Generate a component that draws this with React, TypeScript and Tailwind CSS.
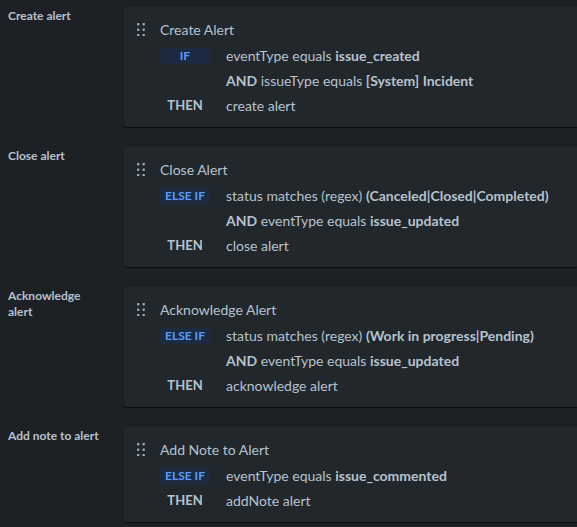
const rules = [
  {
    label: "Create alert",
    title: "Create Alert",
    badge: "IF",
    lines: [
      [{ t: "eventType equals " }, { t: "issue_created", b: true }],
      [{ t: "AND", b: true }, { t: " issueType equals " }, { t: "[System] Incident", b: true }],
    ],
    then: "create alert",
  },
  {
    label: "Close alert",
    title: "Close Alert",
    badge: "ELSE IF",
    lines: [
      [{ t: "status matches (regex) " }, { t: "(Canceled|Closed|Completed)", b: true }],
      [{ t: "AND", b: true }, { t: " eventType equals " }, { t: "issue_updated", b: true }],
    ],
    then: "close alert",
  },
  {
    label: "Acknowledge alert",
    title: "Acknowledge Alert",
    badge: "ELSE IF",
    lines: [
      [{ t: "status matches (regex) " }, { t: "(Work in progress|Pending)", b: true }],
      [{ t: "AND", b: true }, { t: " eventType equals " }, { t: "issue_updated", b: true }],
    ],
    then: "acknowledge alert",
  },
  {
    label: "Add note to alert",
    title: "Add Note to Alert",
    badge: "ELSE IF",
    lines: [[{ t: "eventType equals " }, { t: "issue_commented", b: true }]],
    then: "addNote alert",
  },
];

function Handle() {
  return (
    <svg width="10" height="14" viewBox="0 0 10 14" className="shrink-0">
      {[1, 6.5, 12].map((y) =>
        [1, 6.5].map((x) => <rect key={`${x}-${y}`} x={x} y={y} width="2.4" height="2.4" rx="0.8" fill="#9fadbc" />)
      )}
    </svg>
  );
}

function App() {
  return (
    <div
      className="h-[527px] bg-[#1d2125] text-[#b6c2cf] overflow-hidden"
      style={{ fontFamily: "Lato, 'Liberation Sans', sans-serif" }}
    >
      {rules.map((r, i) => (
        <div key={i} className="flex h-[140px]">
          <div className="w-[124px] shrink-0 pl-2 pr-[18px] pt-[8px] text-[12px] font-bold leading-[16px]">
            {r.label}
          </div>
          <div className="flex-1 self-start mt-[7px] rounded-l-[3px] bg-[#22272b] shadow-[0_1px_1px_#0b0d0e] pl-3 pt-3 pb-[9px]">
            <div className="flex items-center h-[20px] gap-[14px] text-[14px]">
              <Handle />
              <span>{r.title}</span>
            </div>
            <div className="mt-1 pl-6">
              <div className="flex items-center h-[25px]">
                <span className="w-[50px] h-[16px] rounded-[3px] bg-[#1c2b41] text-[#579dff] text-[12px] font-bold flex items-center justify-center">
                  {r.badge}
                </span>
                <span className="ml-4 text-[14px] whitespace-pre">
                  {r.lines[0].map((s, k) => (
                    <span key={k} className={s.b ? "font-bold" : ""}>{s.t}</span>
                  ))}
                </span>
              </div>
              {r.lines.slice(1).map((line, j) => (
                <div key={j} className="flex items-center h-[25px] pl-[66px] text-[14px] whitespace-pre">
                  {line.map((s, k) => (
                    <span key={k} className={s.b ? "font-bold" : ""}>{s.t}</span>
                  ))}
                </div>
              ))}
              <div className="flex items-center h-[25px]">
                <span className="w-[50px] text-center text-[13px] font-bold">THEN</span>
                <span className="ml-4 text-[14px]">{r.then}</span>
              </div>
            </div>
          </div>
        </div>
      ))}
    </div>
  );
}

export default App;
